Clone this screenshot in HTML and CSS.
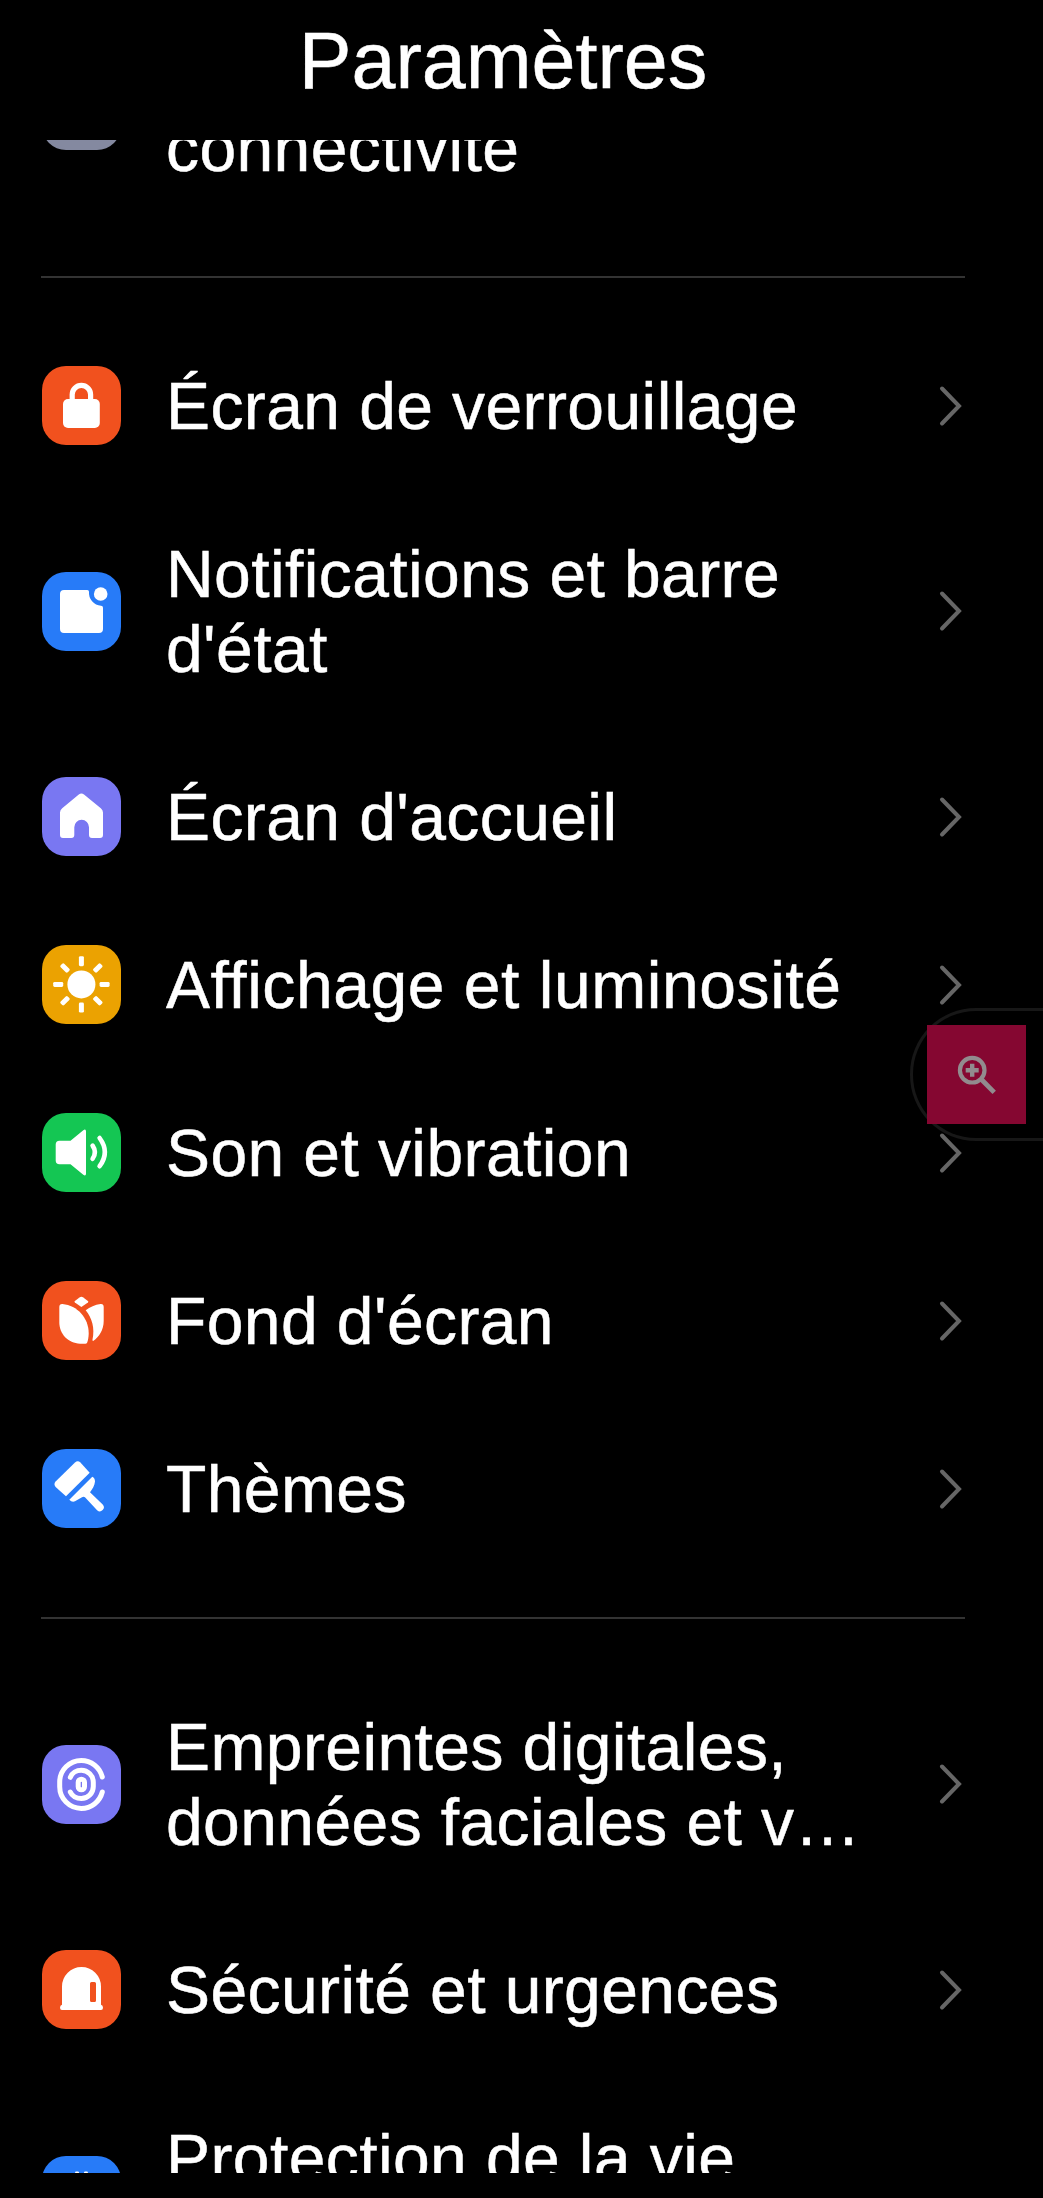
FILE: index.html
```html
<!DOCTYPE html>
<html lang="fr">
<head>
<meta charset="utf-8">
<title>Paramètres</title>
<link rel="stylesheet" href="styles.css">
</head>
<body>
<svg class="defs" aria-hidden="true">
  <symbol id="chevron" viewBox="0 0 26 42"><path d="M4 3.5 21 21 4 38.5" fill="none" stroke="#666" stroke-width="4" stroke-linecap="round" stroke-linejoin="miter"/></symbol>
</svg>
<header class="header"><h1 class="title">Paramètres</h1></header>
<main class="list">
  <div class="row row-first">
    <span class="tile gray"></span>
    <span class="label label-last-line">connectivité</span>
  </div>
  <hr class="divider">
  <div class="row">
    <svg class="tile orange" viewBox="0 0 79 79"><rect x="21" y="33" width="36.8" height="29" rx="5" fill="#fff"/><path d="M30.2 36v-7.4a9.2 9.2 0 0 1 18.4 0V36" fill="none" stroke="#fff" stroke-width="5.2"/></svg>
    <span class="label">Écran de verrouillage</span>
    <svg class="chevron"><use href="#chevron"/></svg>
  </div>
  <div class="row">
    <svg class="tile blue" viewBox="0 0 79 79"><path d="M22 18H45.3q1.7 0 1.7 1.8A13 13 0 0 0 59 33.8q2 .2 2 2V57a4 4 0 0 1-4 4H22a4 4 0 0 1-4-4V22a4 4 0 0 1 4-4Z" fill="#fff"/><circle cx="58.7" cy="22" r="6.8" fill="#fff"/></svg>
    <span class="label">Notifications et barre<br>d'état</span>
    <svg class="chevron"><use href="#chevron"/></svg>
  </div>
  <div class="row">
    <svg class="tile purple" viewBox="0 0 79 79"><path d="M36.8 17.6q2.6-2 5.2 0L58.8 31.2Q61 33 61 35.5V58a3 3 0 0 1-3 3h-8a3 3 0 0 1-3-3v-7.8a7.35 7.35 0 0 0-14.7 0V58a3 3 0 0 1-3 3H21a3 3 0 0 1-3-3V35.5Q18 33 20.2 31.2Z" fill="#fff"/></svg>
    <span class="label">Écran d'accueil</span>
    <svg class="chevron"><use href="#chevron"/></svg>
  </div>
  <div class="row">
    <svg class="tile yellow" viewBox="0 0 79 79"><g fill="#fff" transform="translate(39.4 39.4)"><circle r="14"/><g id="rays"><rect x="-2.5" y="-28.2" width="5" height="10" rx="1.4"/><rect x="-2.5" y="18.2" width="5" height="10" rx="1.4"/><rect x="-28.2" y="-2.5" width="10" height="5" rx="1.4"/><rect x="18.2" y="-2.5" width="10" height="5" rx="1.4"/></g><use href="#rays" transform="rotate(45)"/></g></svg>
    <span class="label label-wide">Affichage et luminosité</span>
    <svg class="chevron"><use href="#chevron"/></svg>
  </div>
  <div class="row">
    <svg class="tile green" viewBox="0 0 79 79"><path d="M17.5 27.7H28.5L41.3 17.2Q44 15.5 44 18.5V60.5Q44 63.5 41.3 61.8L28.5 51.3H17.5a3.8 3.8 0 0 1-3.8-3.8v-16a3.8 3.8 0 0 1 3.8-3.8Z" fill="#fff"/><path d="M50.6 32.6q4.6 6.6 0 13.2M57.6 25q10.5 14.2 0 28.2" fill="none" stroke="#fff" stroke-width="4.6" stroke-linecap="round"/></svg>
    <span class="label">Son et vibration</span>
    <svg class="chevron"><use href="#chevron"/></svg>
  </div>
  <div class="row">
    <svg class="tile orange" viewBox="0 0 79 79"><g fill="#fff"><path d="M37.5 16.4q1.9-1.3 3.8 0l4.6 3.6q1 .8 0 1.6L39.4 26l-6.5-4.4q-1-.8 0-1.6Z"/><path d="M17.3 26q0-3.2 3.2-3C35.5 24.5 46.6 37 46.7 52c0 4-.6 7-1.5 9.5q-.5 1.2-1.9 1.2H38C26 62.2 17.3 53 17.3 41Z"/><path d="M43.7 29.2C48 26.2 53 23.7 58.5 23q3.2-.3 3.2 3V40C61.7 49 57 56 51.5 59.8q-1.3.4-1-1.2C53 47 50 37 43.7 29.2Z"/></g></svg>
    <span class="label">Fond d'écran</span>
    <svg class="chevron"><use href="#chevron"/></svg>
  </div>
  <div class="row">
    <svg class="tile blue" viewBox="0 0 79 79"><g fill="#fff"><path d="M33 13.4q2.7-2.3 5.4 0L47.7 23.7 24 47.3 13.6 38q-2.3-2.7 0-5.4Z"/><path d="M50.3 27.7Q53 29 53 32.5C52.6 37 50.5 40 48 43.2L60.7 55.6a4 4 0 0 1-5.6 5.7L43.2 48.4Q42 47.4 40 48.2L33 52.3Q30 53.6 27.3 50.7Z"/></g></svg>
    <span class="label">Thèmes</span>
    <svg class="chevron"><use href="#chevron"/></svg>
  </div>
  <hr class="divider">
  <div class="row">
    <svg class="tile purple" viewBox="0 0 79 79"><g fill="none" stroke="#fff" stroke-width="5" stroke-linecap="round"><path d="M60.3 32C57.7 22 49 15.4 39.3 15.4A21.6 21.6 0 0 0 17.7 37v4.8A21.6 21.6 0 0 0 39.3 63.4C49 63.4 57.7 57 60.3 47"/><path d="M28.3 32.3C30 28 34.5 25.3 39.3 25.3a12 12 0 0 1 12 12v4.2a12 12 0 0 1-12 12C34.5 53.5 30 51 28.3 47"/><rect x="36.2" y="34.2" width="6.3" height="10.6" rx="3.15"/></g></svg>
    <span class="label">Empreintes digitales,<br>données faciales et v…</span>
    <svg class="chevron"><use href="#chevron"/></svg>
  </div>
  <div class="row">
    <svg class="tile orange" viewBox="0 0 79 79"><path fill="#fff" fill-rule="evenodd" d="M20 36.5a19.5 19.5 0 0 1 39 0V54.8q2 .6 2 3 0 2.2-2 2.2H20q-2 0-2-2.2 0-2.4 2-3ZM49.5 32a1.5 1.5 0 0 0-1.5 1.5v17a1.5 1.5 0 0 0 1.5 1.5h3a1.5 1.5 0 0 0 1.5-1.5v-17a1.5 1.5 0 0 0-1.5-1.5Z"/></svg>
    <span class="label">Sécurité et urgences</span>
    <svg class="chevron"><use href="#chevron"/></svg>
  </div>
  <div class="row">
    <svg class="tile blue" viewBox="0 0 79 79"><path d="M33.5 16h3l-1 4ZM42.5 16h3l-2 4Z" fill="#fff" stroke="#fff"/></svg>
    <span class="label label-first-line">Protection de la vie</span>
  </div>
</main>
<div class="float-tab">
  <div class="zoom-button">
    <svg class="zoom-icon" viewBox="0 0 42 42" fill="none" stroke="#928b8e"><circle cx="16.2" cy="16.2" r="12.3" stroke-width="4.2"/><path d="M16.2 9.7v13M9.7 16.2h13" stroke-width="4.4"/><path d="M25 25 38.2 38.4" stroke-width="4.8"/></svg>
  </div>
</div>
</body>
</html>
```
FILE: styles.css
```css
* { box-sizing: border-box; }
body {
  margin: 0;
  height: 2198px;
  overflow: hidden;
  position: relative;
  background: #000;
  color: #fff;
  font-family: "Liberation Sans", Arial, sans-serif;
  -webkit-text-stroke: 0.5px #fff;
}
.defs { display: none; }
.header {
  height: 140px;
  padding: 15px 37px 0 0;
  text-align: center;
}
.title {
  margin: 0;
  font-size: 79px;
  line-height: 91px;
  font-weight: 400;
}
.list {
  height: 2033px;
  padding: 0 78px 0 41px;
  overflow: hidden;
}
.row {
  display: flex;
  align-items: center;
  padding: 46.5px 0 46.5px 1px;
}
.row-first { margin-top: -151.5px; }
.tile {
  flex: none;
  width: 79px;
  height: 79px;
  margin: -2px 45px -2px 0;
  border-radius: 24px;
}
.gray { background: #8489a0; }
.orange { background: #f1511e; }
.blue { background: #277bf8; }
.purple { background: #7977f2; }
.yellow { background: #eba201; }
.green { background: #14c653; }
.label {
  flex: 1;
  padding-top: 1px;
  margin-bottom: -1px;
  font-size: 66px;
  line-height: 75px;
  letter-spacing: 0.4px;
  white-space: nowrap;
}
.label-wide { letter-spacing: 0.55px; }
.label-last-line { padding-top: 76px; }
.label-first-line { padding-bottom: 75px; }
.chevron {
  flex: none;
  width: 26px;
  height: 42px;
  margin-right: 1px;
}
.divider {
  height: 2px;
  margin: 44.5px 0 43.5px;
  border: 0;
  background: #333;
}
.float-tab {
  position: absolute;
  top: 1008px;
  right: 0;
  width: 133px;
  height: 133px;
  padding: 14px;
  border: 3px solid #171717;
  border-right: 0;
  border-radius: 66px 0 0 66px;
}
.zoom-button {
  width: 99px;
  height: 99px;
  display: flex;
  align-items: center;
  justify-content: center;
  background: #850731;
}
.zoom-icon {
  width: 42px;
  height: 42px;
}
```
